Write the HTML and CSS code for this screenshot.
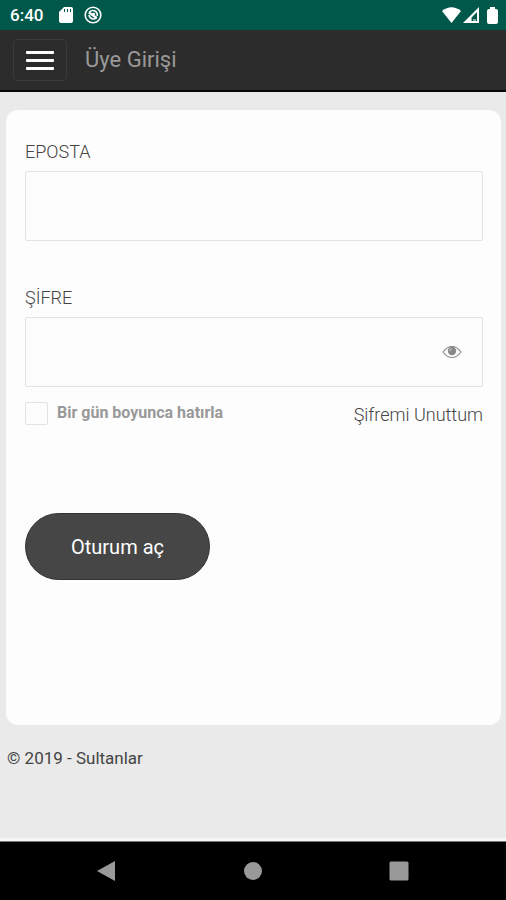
FILE: index.html
```html
<!DOCTYPE html>
<html lang="tr">
<head>
<meta charset="utf-8">
<meta name="viewport" content="width=device-width, initial-scale=1">
<title>Üye Girişi</title>
<link rel="stylesheet" href="styles.css">
</head>
<body>
<div class="status">
  <span class="clock">6:40</span>
  <svg class="sd" width="14" height="16" viewBox="0 0 14 16" aria-hidden="true"><path fill="#fff" d="M5 0h7q2 0 2 2v12q0 2-2 2H2q-2 0-2-2V5z"/><path stroke="#00584b" stroke-width="1" d="M5.500 2v3M8.500 2v3M11.500 2v3"/></svg>
  <svg width="18" height="18" viewBox="0 0 18 18" fill="none" stroke="#fff" aria-hidden="true"><circle cx="9" cy="9" r="7.800" stroke-width="1.600"/><path stroke-width="1.700" d="M5.300 6.300Q7.500 3.800 10.500 4.800Q13.800 6.300 13.200 10M5 9Q5.500 12.500 9 13Q11 13 12.500 11.800"/><path stroke-width="2.200" d="M4.800 6.500L12.800 12M8.500 7.500L11 8.500"/></svg>
  <span class="signals">
    <svg width="19" height="16" viewBox="0 0 19 16" aria-hidden="true"><path fill="#fff" d="M0 4Q9.500-3.500 19 4L9.500 16z"/></svg>
    <svg width="16" height="16" viewBox="0 0 16 16" aria-hidden="true"><path fill="#fff" fill-rule="evenodd" d="M16 0v16H0zM14 5L8.500 10.500V14H14z"/><path fill="#fff" d="M10 12h3v2h-3z" opacity=".5"/></svg>
    <svg class="battery" width="11" height="17" viewBox="0 0 11 17" aria-hidden="true"><path fill="#fff" d="M3 0h5v2h1q2 0 2 2v11q0 2-2 2H2q-2 0-2-2V4q0-2 2-2h1z"/></svg>
  </span>
</div>
<header class="navbar">
  <button class="menu" type="button" aria-label="Menü"><span></span><span></span><span></span></button>
  <h1>Üye Girişi</h1>
</header>
<main>
  <form class="card">
    <div class="field">
      <label for="email">EPOSTA</label>
      <input id="email" class="box" type="email">
    </div>
    <div class="field">
      <label for="password">ŞİFRE</label>
      <div class="password">
        <input id="password" class="box" type="password">
        <button class="reveal" type="button" aria-label="Şifreyi göster">
          <svg width="20" height="14" viewBox="0 0 20 14" fill="none" stroke="#888"><path stroke-width="1.200" d="M1 7Q5 1.500 10 1.500T19 7Q15 12.500 10 12.500T1 7z"/><circle cx="10" cy="6" r="4.200" fill="#888" stroke="none"/><path stroke="#ddd" stroke-width="1" d="M7.800 6Q7.800 4 9.800 3.800"/></svg>
        </button>
      </div>
    </div>
    <div class="options">
      <label class="remember"><input type="checkbox"><span>Bir gün boyunca hatırla</span></label>
      <a href="#">Şifremi Unuttum</a>
    </div>
    <button class="submit" type="submit">Oturum aç</button>
  </form>
  <footer>© 2019 - Sultanlar</footer>
</main>
<nav class="system">
  <button type="button" aria-label="Geri"><svg width="22" height="22" viewBox="0 0 22 22"><path fill="#999" d="M2 11L20 1v20z"/></svg></button>
  <button type="button" aria-label="Ana ekran"><svg width="22" height="22" viewBox="0 0 22 22"><circle cx="11" cy="11" r="9" fill="#999"/></svg></button>
  <button type="button" aria-label="Son uygulamalar"><svg width="22" height="22" viewBox="0 0 22 22"><rect x="1.500" y="1.500" width="19" height="19" rx="1.500" fill="#999"/></svg></button>
</nav>
</body>
</html>
```
FILE: styles.css
```css
* {
  box-sizing: border-box;
}

body {
  margin: 0;
  min-height: 100vh;
  display: flex;
  flex-direction: column;
  background: #eaeaea;
  color: #444;
  font: 17px/24px Roboto, sans-serif;
}

button {
  padding: 0;
  border: 0;
  background: none;
  font: inherit;
}

svg {
  display: block;
}

.status {
  display: flex;
  align-items: center;
  height: 30px;
  padding: 0 8px 0 10px;
  background: #00584b;
  color: #fff;
}

.clock {
  font-weight: 500;
}

.sd {
  margin: 0 11px 0 16px;
}

.signals {
  display: flex;
  align-items: center;
  gap: 2px;
  margin-left: auto;
}

.battery {
  margin-left: 6px;
}

.navbar {
  display: flex;
  align-items: center;
  gap: 18px;
  height: 62px;
  padding: 0 13px;
  background: #2c2c2c;
  border-bottom: 2px solid #080808;
}

.menu {
  display: flex;
  flex-direction: column;
  align-items: center;
  justify-content: center;
  gap: 5px;
  width: 54px;
  height: 42px;
  border: 1px solid #393c3d;
  border-radius: 4px;
}

.menu span {
  width: 28px;
  height: 3px;
  border-radius: 1px;
  background: #fff;
}

h1 {
  margin: 0;
  color: #999;
  font-size: 22px;
  font-weight: 400;
}

main {
  flex: 1;
  padding: 18px 5px 0 6px;
  border-bottom: 3px solid #f6f6f6;
}

.card {
  min-height: 615px;
  padding: 30px 18px 30px 19px;
  border-radius: 12px;
  background: #fdfdfd;
}

.field {
  display: flex;
  flex-direction: column;
  gap: 7px;
  margin-bottom: 45px;
}

.field label {
  color: #444;
  font-size: 18px;
  font-weight: 300;
}

.box {
  display: block;
  width: 100%;
  height: 70px;
  padding: 0 20px;
  border: 1px solid #e3e3e3;
  border-radius: 2px;
  background: #fdfdfd;
  font: inherit;
}

.password {
  position: relative;
}

.reveal {
  position: absolute;
  top: 0;
  right: 21px;
  height: 100%;
}

.field:nth-child(2) {
  margin-bottom: 14px;
}

.options {
  display: flex;
  align-items: flex-start;
  justify-content: space-between;
}

.remember {
  display: flex;
  align-items: center;
  gap: 9px;
  color: #999;
  font-size: 16px;
  font-weight: 700;
}

.remember input {
  appearance: none;
  width: 23px;
  height: 23px;
  margin: 0;
  border: 1px solid #e3e3e3;
  border-radius: 2px;
}

.options a {
  padding-top: 2px;
  color: #444;
  font-size: 18px;
  font-weight: 300;
  text-decoration: none;
}

.submit {
  margin-top: 86px;
  padding: 0 45px;
  height: 67px;
  border: 1px solid #333;
  border-radius: 34px;
  background: #464646;
  color: #fff;
  font-size: 20px;
}

footer {
  padding: 21px 1px;
}

.system {
  display: flex;
  align-items: center;
  justify-content: space-between;
  height: 59px;
  padding: 0 96px 0 95px;
  border-top: 1px solid #777;
  background: #000;
}
```
